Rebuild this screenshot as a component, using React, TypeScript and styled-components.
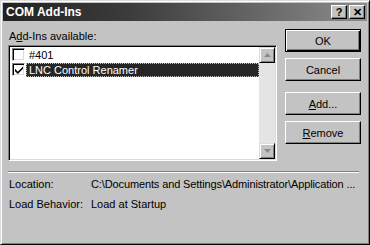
import styled, { createGlobalStyle } from "styled-components";

const GlobalStyle = createGlobalStyle`
  html, body {
    margin: 0;
    padding: 0;
    background: #c0c0c0;
  }
  body {
    font-family: "Liberation Sans", Arial, sans-serif;
    font-size: 11px;
    color: #000;
  }
`;

const Window = styled.div`
  box-sizing: border-box;
  width: 370px;
  height: 245px;
  background: #c3c3c3;
  border: 1px solid;
  border-color: #dcdcdc #000 #000 #dcdcdc;
  box-shadow: inset 1px 1px 0 #fff, inset -1px -1px 0 #7f7f7f;
  padding: 2px;
  display: flex;
  flex-direction: column;
`;

const TitleBar = styled.div`
  height: 18px;
  display: flex;
  align-items: center;
  padding: 0 2px 0 3px;
  background: linear-gradient(90deg, #222 0%, #3c3c3c 35%, #8c8c8c 100%);
  color: #fff;
  font-weight: bold;
  font-size: 12px;
`;

const Title = styled.span`
  flex: 1;
`;

const CaptionButton = styled.div`
  box-sizing: border-box;
  width: 16px;
  height: 14px;
  margin-left: 2px;
  background: #c3c3c3;
  border: 1px solid;
  border-color: #fff #000 #000 #fff;
  box-shadow: inset -1px -1px 0 #7f7f7f;
  display: flex;
  align-items: center;
  justify-content: center;
  color: #000;
  font-weight: bold;
  font-size: 11px;
  line-height: 1;
`;

const Body = styled.div`
  flex: 1;
  display: flex;
  flex-direction: column;
  padding: 8px 6px 0 5px;
`;

const Top = styled.div`
  display: flex;
  gap: 8px;
`;

const LeftCol = styled.div`
  width: 269px;
  display: flex;
  flex-direction: column;
`;

const Label = styled.div`
  line-height: 14px;
  padding-left: 1px;
  margin-bottom: 2px;
`;

const ListBox = styled.div`
  box-sizing: border-box;
  height: 116px;
  background: #fff;
  border: 1px solid;
  border-color: #7f7f7f #fff #fff #7f7f7f;
  box-shadow: inset 1px 1px 0 #000, inset -1px -1px 0 #dcdcdc;
  padding: 1px;
  display: flex;
`;

const Rows = styled.div`
  flex: 1;
`;

const Row = styled.div`
  height: 15px;
  display: flex;
  align-items: center;
  padding-left: 2px;
`;

const CheckBox = styled.div`
  box-sizing: border-box;
  width: 13px;
  height: 13px;
  background: #fff;
  border: 1px solid;
  border-color: #7f7f7f #fff #fff #7f7f7f;
  box-shadow: inset 1px 1px 0 #000, inset -1px -1px 0 #dcdcdc;
  display: flex;
  align-items: center;
  justify-content: center;
`;

const ItemText = styled.div<{ $selected?: boolean }>`
  flex: 1;
  height: 14px;
  line-height: 14px;
  margin-left: 1px;
  padding-left: 3px;
  background: ${(p) => (p.$selected ? "#262626" : "transparent")};
  color: ${(p) => (p.$selected ? "#fff" : "#000")};
  outline: ${(p) => (p.$selected ? "1px dotted #c0c0c0" : "none")};
  outline-offset: -1px;
`;

const ScrollBar = styled.div`
  width: 16px;
  display: flex;
  flex-direction: column;
  justify-content: space-between;
  background-color: #e4e4e4;
`;

const ArrowButton = styled.div`
  box-sizing: border-box;
  width: 16px;
  height: 16px;
  background: #c3c3c3;
  border: 1px solid;
  border-color: #dcdcdc #000 #000 #dcdcdc;
  box-shadow: inset 1px 1px 0 #fff, inset -1px -1px 0 #7f7f7f;
  display: flex;
  align-items: center;
  justify-content: center;
`;

const ButtonCol = styled.div`
  display: flex;
  flex-direction: column;
`;

const Button = styled.div<{ $default?: boolean; $gap?: number }>`
  box-sizing: border-box;
  width: 76px;
  height: 23px;
  margin-top: ${(p) => p.$gap ?? 0}px;
  background: #c3c3c3;
  border: 1px solid;
  border-color: ${(p) => (p.$default ? "#000" : "#fff #000 #000 #fff")};
  box-shadow: ${(p) =>
    p.$default
      ? "inset 1px 1px 0 #fff, inset -1px -1px 0 #000, inset -2px -2px 0 #7f7f7f"
      : "inset -1px -1px 0 #7f7f7f"};
  display: flex;
  align-items: center;
  justify-content: center;
  font-size: 11px;

  u {
    text-decoration: underline;
  }
`;

const Separator = styled.div`
  margin: 10px 2px 0 0;
  height: 0;
  border-top: 1px solid #7f7f7f;
  border-bottom: 1px solid #fff;
`;

const Info = styled.div`
  display: grid;
  grid-template-columns: 82px 1fr;
  row-gap: 6px;
  padding: 4px 0 0 1px;
  line-height: 14px;
  white-space: nowrap;
`;

const Value = styled.span`
  letter-spacing: -0.12px;
`;

const Check = () => (
  <svg width="8" height="8" viewBox="0 0 7 7">
    <path d="M0 2.5 L0 4.5 L2.5 7 L7 2.5 L7 0.5 L2.5 5 Z" fill="#000" />
  </svg>
);

const Arrow = ({ down }: { down?: boolean }) => (
  <svg width="7" height="4" viewBox="0 0 7 4">
    <path d={down ? "M0 0 H7 L3.5 4 Z" : "M0 4 H7 L3.5 0 Z"} fill="#8a8a8a" />
  </svg>
);

export default function App() {
  return (
    <>
      <GlobalStyle />
      <Window>
        <TitleBar>
          <Title>COM Add-Ins</Title>
          <CaptionButton>?</CaptionButton>
          <CaptionButton>✕</CaptionButton>
        </TitleBar>
        <Body>
          <Top>
            <LeftCol>
              <Label>
                A<u>d</u>d-Ins available:
              </Label>
              <ListBox>
                <Rows>
                  <Row>
                    <CheckBox />
                    <ItemText>#401</ItemText>
                  </Row>
                  <Row>
                    <CheckBox>
                      <Check />
                    </CheckBox>
                    <ItemText $selected>LNC Control Renamer</ItemText>
                  </Row>
                </Rows>
                <ScrollBar>
                  <ArrowButton>
                    <Arrow />
                  </ArrowButton>
                  <ArrowButton>
                    <Arrow down />
                  </ArrowButton>
                </ScrollBar>
              </ListBox>
            </LeftCol>
            <ButtonCol>
              <Button $default>OK</Button>
              <Button $gap={6}>Cancel</Button>
              <Button $gap={11}>
                <span>
                  <u>A</u>dd...
                </span>
              </Button>
              <Button $gap={6}>
                <span>
                  <u>R</u>emove
                </span>
              </Button>
            </ButtonCol>
          </Top>
          <Separator />
          <Info>
            <span>Location:</span>
            <Value>C:\Documents and Settings\Administrator\Application ...</Value>
            <span>Load Behavior:</span>
            <span>Load at Startup</span>
          </Info>
        </Body>
      </Window>
    </>
  );
}
